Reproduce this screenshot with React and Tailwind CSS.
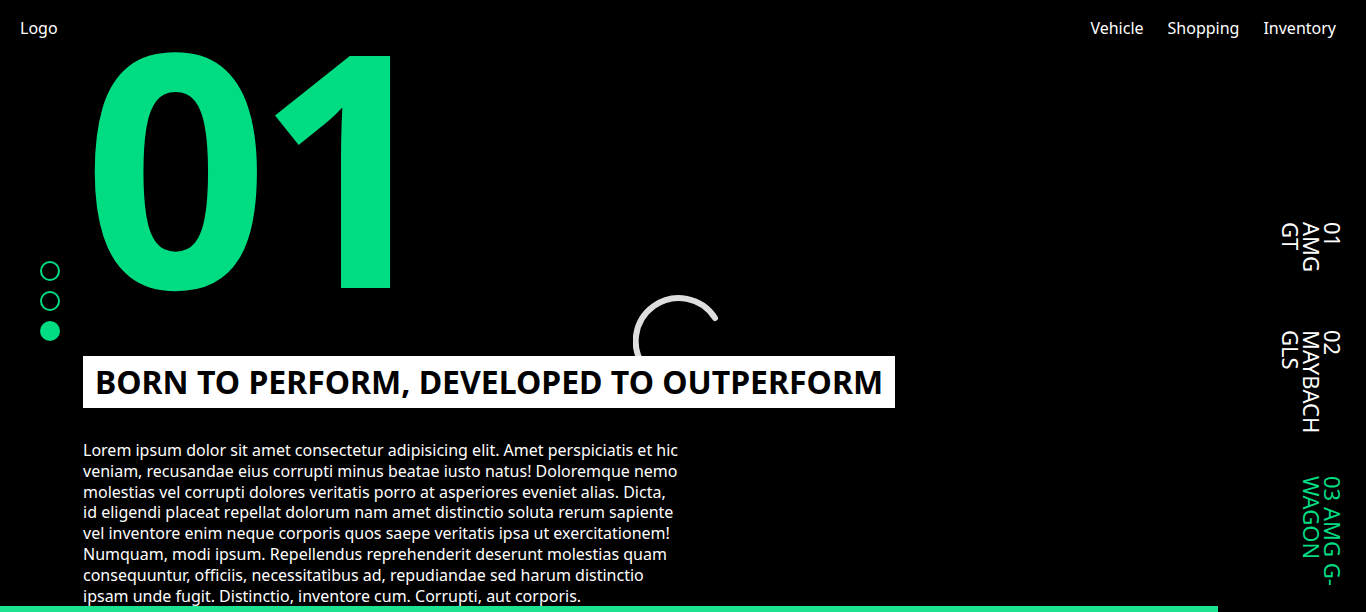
const models = [
    { lines: ["01", "AMG", "GT"], active: false, box: "h-[108px]" },
    { lines: ["02", "MAYBACH", "GLS"], active: false, box: "h-[146px]" },
    { lines: ["03 AMG G-", "WAGON"], active: true, box: "" }
];

const Spinner = () => (
    <svg
        className="absolute left-[633px] top-[293px] z-0"
        width="94"
        height="94"
        viewBox="0 0 94 94"
    >
        {/* gray arc, lower half hides behind the heading */}
        <path
            d="M 82 25 A 43 43 0 1 0 74.5 80"
            fill="none"
            stroke="#dedede"
            strokeWidth="6"
            strokeLinecap="round"
        />
    </svg>
);

const App = () => {
    return (
        <div
            className="relative h-[612px] w-[1366px] overflow-hidden bg-black text-white"
            style={{ fontFamily: "'Noto Sans', 'Open Sans', sans-serif" }}
        >
            <header className="relative z-20 flex h-14 items-center justify-between pl-5 pr-[30px] text-[16px]">
                <span>Logo</span>
                <nav className="flex gap-6">
                    <a href="#">Vehicle</a>
                    <a href="#">Shopping</a>
                    <a href="#">Inventory</a>
                </nav>
            </header>

            <Spinner />

            <main className="flex justify-between">
                <div className="flex items-start pl-10">
                    {/* slide dots */}
                    <div className="mt-[205px] flex flex-col gap-[10px]">
                        <span className="h-5 w-5 rounded-full border-2 border-[#00dc82]"></span>
                        <span className="h-5 w-5 rounded-full border-2 border-[#00dc82]"></span>
                        <span className="h-5 w-5 rounded-full bg-[#00dc82]"></span>
                    </div>

                    <div className="ml-[23px] flex flex-col items-start">
                        <h1 className="-mt-14 font-['Open_Sans',sans-serif] text-[325px] font-bold leading-none tracking-[-0.04em] text-[#00dc82]">01</h1>
                        <h2 className="relative z-10 mt-[31px] bg-white px-3 text-[32px] font-bold uppercase leading-[52px] text-black">
                            Born to perform, developed to outperform
                        </h2>
                        <p className="mt-[32px] w-[600px] text-[16px] font-normal leading-[1.3]">
                            Lorem ipsum dolor sit amet consectetur adipisicing elit. Amet perspiciatis et hic veniam,
                            recusandae eius corrupti minus beatae iusto natus! Doloremque nemo molestias vel corrupti
                            dolores veritatis porro at asperiores eveniet alias. Dicta, id eligendi placeat repellat
                            dolorum nam amet distinctio soluta rerum sapiente vel inventore enim neque corporis quos
                            saepe veritatis ipsa ut exercitationem! Numquam, modi ipsum. Repellendus reprehenderit
                            deserunt molestias quam consequuntur, officiis, necessitatibus ad, repudiandae sed harum
                            distinctio ipsam unde fugit. Distinctio, inventore cum. Corrupti, aut corporis.
                        </p>
                    </div>
                </div>

                {/* model list */}
                <div className="mt-[166px] flex flex-col items-end pr-[23px]">
                    {models.map((m, i) => (
                        <div key={i} className={m.box}>
                            <div
                                className={`[writing-mode:vertical-rl] text-[22px] leading-[21px] ${m.active ? "text-[#00dc82]" : "text-white"}`}
                            >
                                {m.lines.map((l, j) => (
                                    <span key={j}>
                                        {l}
                                        {j < m.lines.length - 1 && <br />}
                                    </span>
                                ))}
                            </div>
                        </div>
                    ))}
                </div>
            </main>

            {/* progress */}
            <div className="absolute bottom-0 left-0 z-20 h-[6px] w-[1218px] bg-[#1de28f]"></div>
        </div>
    );
};

export default App;
